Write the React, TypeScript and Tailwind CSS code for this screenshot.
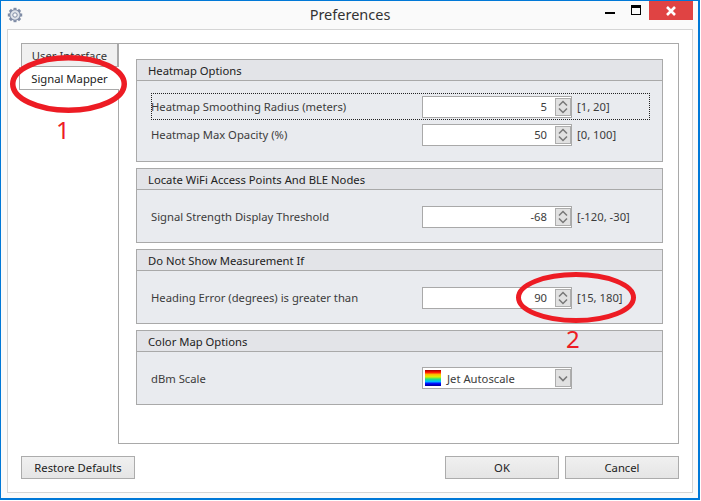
import React from 'react';

const font = { fontFamily: '"Noto Sans", sans-serif' };
const gearTeeth = [0, 45, 90, 135, 180, 225, 270, 315];

function GearIcon() {
  return (
    <svg className="absolute left-[0px] top-[6px]" width="16" height="16" viewBox="0 0 16 16">
      {gearTeeth.map((angle) => (
        <rect key={angle} x="6.5" y="0.8" width="3" height="3.2" fill="#7f8ca6" transform={`rotate(${angle} 8 8)`} />
      ))}
      <circle cx="8" cy="8" r="5.2" fill="#dfe3ea" stroke="#7f8ca6" strokeWidth="1.1" />
      <circle cx="8" cy="8" r="2.2" fill="#fafafa" stroke="#7f8ca6" strokeWidth="1" />
    </svg>
  );
}

function SpinButtons() {
  return (
    <div className="w-[16px] h-[18px] border border-[#adadad] bg-[#e1e1e1] flex items-center justify-center">
      <svg width="10" height="14" viewBox="0 0 10 14" fill="none" stroke="#787878" strokeWidth="1.5">
        <path d="M1 5.5 L5 1.5 L9 5.5" />
        <path d="M1 8.5 L5 12.5 L9 8.5" />
      </svg>
    </div>
  );
}

function SpinField({ label, value, range, focused }: { label: string; value: string; range: string; focused?: boolean }) {
  return (
    <div className={`h-[27px] w-[499px] flex items-center border border-dotted ${focused ? 'border-[#222]' : 'border-transparent'}`}>
      <span className="w-[271px] -ml-px pt-[2px] shrink-0 text-[#3c3c3c]">{label}</span>
      <div className="w-[150px] h-[22px] shrink-0 border border-[#a9a9a9] bg-white flex items-center justify-end">
        <span className="mr-[8px] pt-[2px] text-[#3c3c3c]">{value}</span>
        <SpinButtons />
      </div>
      <span className="ml-[5px] pt-[2px] text-[#3c3c3c] whitespace-nowrap">{range}</span>
    </div>
  );
}

function Group({ title, height, children }: { title: string; height: string; children: React.ReactNode }) {
  return (
    <div className={`border border-[#a9a9a9] bg-[#e9ebef] ${height}`}>
      <div className="h-[21px] pt-[3px] px-[11px] bg-[#e3e4e8] border-b border-[#a9a9a9] flex items-center text-[#222]">{title}</div>
      {children}
    </div>
  );
}

function DialogButton({ label, width }: { label: string; width: string }) {
  return (
    <button className={`${width} h-[23px] pt-px border border-[#acacac] bg-linear-to-b from-[#f0f0f0] to-[#e5e5e5] text-[#222] flex items-center justify-center`}>
      {label}
    </button>
  );
}

export default function App() {
  return (
    <div style={font} className="relative w-[701px] h-[501px] overflow-hidden bg-white text-[11.25px]">
      <div className="h-[500px] w-[700px] border border-r-2 border-b-2 border-[#0078d7] bg-[#fafafa] flex flex-col pl-[6px] pr-[5px] pb-[5px]">
        <div className="h-[28px] shrink-0 relative flex items-center justify-center text-[14.5px] text-[#333]">
          Preferences
          <GearIcon />
          <div className="absolute left-[598px] top-[11px] w-[10px] h-[2px] bg-black" />
          <div className="absolute left-[624px] top-[4px] w-[10px] h-[10px] border border-black border-t-[3px]" />
          <div className="absolute left-[642px] top-0 w-[44px] h-[19px] bg-[#e04343] flex items-center justify-center">
            <svg width="10" height="10" viewBox="0 0 10 10" stroke="#fff" strokeWidth="2.6">
              <path d="M1 1 L9 9 M9 1 L1 9" />
            </svg>
          </div>
        </div>

        <div className="flex-1 border border-[#d5d5d5] bg-white pt-[13px] px-[13px] flex flex-col">
          <div className="flex h-[401px]">
            <div className="w-[97px] shrink-0 flex flex-col relative z-10">
              <div className="h-[24px] pt-[3px] border border-[#a9a9a9] bg-[#f0f0f0] flex items-center justify-center text-[#333]">User Interface</div>
              <div className="h-[23px] pt-[3px] -ml-[2px] -mr-px border-l border-b border-[#a9a9a9] bg-white flex items-center justify-center text-[#222]">Signal Mapper</div>
            </div>
            <div className="flex-1 border border-[#a9a9a9] pt-[15px] pl-[17px] pr-[15px] flex flex-col gap-[6px]">
              <Group title="Heatmap Options" height="h-[103px]">
                <div className="pt-[12px] pl-[14px] flex flex-col gap-px">
                  <SpinField label="Heatmap Smoothing Radius (meters)" value="5" range="[1, 20]" focused />
                  <SpinField label="Heatmap Max Opacity (%)" value="50" range="[0, 100]" />
                </div>
              </Group>
              <Group title="Locate WiFi Access Points And BLE Nodes" height="h-[75px]">
                <div className="pt-[13px] pl-[14px]">
                  <SpinField label="Signal Strength Display Threshold" value="-68" range="[-120, -30]" />
                </div>
              </Group>
              <Group title="Do Not Show Measurement If" height="h-[75px]">
                <div className="pt-[13px] pl-[14px]">
                  <SpinField label="Heading Error (degrees) is greater than" value="90" range="[15, 180]" />
                </div>
              </Group>
              <Group title="Color Map Options" height="h-[75px]">
                <div className="pt-[15px] pl-[14px] flex items-center">
                  <span className="w-[271px] shrink-0 pt-[3px] text-[#3c3c3c]">dBm Scale</span>
                  <div className="w-[150px] h-[22px] border border-[#a9a9a9] bg-white flex items-center pl-[2px]">
                    <div className="w-[16px] h-[16px] bg-[linear-gradient(#a00000,#ff1000,#ffc000,#e0f000,#20e080,#00c0ff,#0000ff,#000090)]" />
                    <span className="ml-[6px] flex-1 pt-[3px] text-[#3c3c3c]">Jet Autoscale</span>
                    <div className="w-[16px] h-[18px] border border-[#adadad] bg-[#e1e1e1] flex items-center justify-center">
                      <svg width="10" height="7" viewBox="0 0 10 7" fill="none" stroke="#787878" strokeWidth="1.6">
                        <path d="M1 1.5 L5 5.5 L9 1.5" />
                      </svg>
                    </div>
                  </div>
                </div>
              </Group>
            </div>
          </div>
          <div className="mt-[12px] flex items-center">
            <DialogButton label="Restore Defaults" width="w-[114px]" />
            <div className="ml-auto flex gap-[6px]">
              <DialogButton label="OK" width="w-[114px]" />
              <DialogButton label="Cancel" width="w-[114px]" />
            </div>
          </div>
        </div>
      </div>

      {/* hand drawn annotations on top of the dialog */}
      <svg className="absolute left-0 top-0 z-20 pointer-events-none" width="701" height="501" fill="none" stroke="#ed1c24">
        <ellipse cx="68.5" cy="84" rx="55.75" ry="26.25" strokeWidth="5.5" />
        <ellipse cx="576" cy="297.5" rx="57.5" ry="23" strokeWidth="5" />
      </svg>
      <span className="absolute z-20 left-[56px] top-[113px] text-[24px] leading-[34px] text-[#ed1c24]">1</span>
      <span className="absolute z-20 left-[566px] top-[322px] text-[24px] leading-[34px] text-[#ed1c24]">2</span>
    </div>
  );
}
